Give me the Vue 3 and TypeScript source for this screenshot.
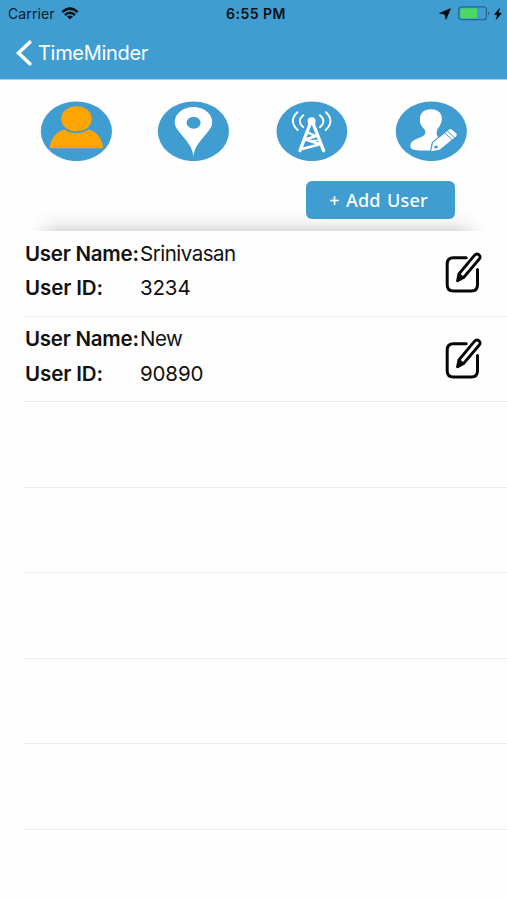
<script setup lang="ts">
interface User {
  name: string
  id: string
}

const users: User[] = [
  { name: 'Srinivasan', id: '3234' },
  { name: 'New', id: '90890' },
]
const emptyRows = 5
</script>

<template>
  <main class="screen">
    <header class="header">
      <div class="status">
        <div class="status-left">
          <span class="carrier">Carrier</span>
          <svg class="wifi" width="18" height="13" viewBox="0 0 18 13" fill="none" stroke="#07131b" stroke-width="2.5">
            <path d="M1.3 5.2Q9-1.9 16.7 5.2" />
            <path d="M4 8Q9 3.6 14 8" />
            <path d="M6 9.6Q9 7.2 12 9.6L9 12.6Z" fill="#07131b" stroke="none" />
          </svg>
        </div>
        <span class="clock">6:55 PM</span>
        <div class="status-right">
          <svg width="12" height="12" viewBox="0 0 12 12"><path d="M11.4.7 7 11.2 5.9 6.2.6 5.3Z" fill="#030a0e" stroke="#030a0e" stroke-width=".7" /></svg>
          <svg class="battery" width="33" height="15" viewBox="0 0 33 15">
            <rect x=".8" y=".9" width="27.6" height="12.8" rx="3" fill="none" stroke="#276791" stroke-width="1.3" />
            <rect x="2.2" y="2.3" width="17" height="10" rx="1.5" fill="#4bd964" />
            <path d="M30 5Q32.5 7.3 30 9.6Z" fill="#276791" />
          </svg>
          <svg width="8" height="12" viewBox="0 0 8 12"><path d="M5.7.3.3 6.6 3.3 7 2 11.8 7.6 5.2 4.5 4.8Z" fill="#030a0e" stroke="#030a0e" stroke-width=".4" /></svg>
        </div>
      </div>
      <nav class="nav">
        <svg width="16" height="26" viewBox="0 0 16 26"><path d="M13.8 2.2 2.5 13 13.8 23.8" fill="none" stroke="#fff" stroke-width="3.6" stroke-linecap="round" /></svg>
        <span class="back">TimeMinder</span>
      </nav>
    </header>

    <section class="tabs">
      <svg class="tab" viewBox="0 0 73 60">
        <ellipse class="disc" cx="36.4" cy="30.3" rx="35.6" ry="29.8" />
        <path d="M9.7 47.2C10.5 38 16.5 30.2 24.5 28.6C31 33.6 42 33.6 48.5 28.6C56.5 30.2 62.5 38 63 47.2Z" fill="#ffa502" />
        <ellipse cx="36.5" cy="17.8" rx="15.8" ry="13.2" fill="#ffa502" stroke="#409dd1" stroke-width="1" />
      </svg>
      <svg class="tab" viewBox="0 0 73 60">
        <ellipse class="disc" cx="36.4" cy="30.3" rx="35.6" ry="29.8" />
        <path d="M36.4 55C35 45 29.5 40 23.5 32.5C20.2 28.5 17.7 25.5 17.7 21.3C17.7 12.8 26 6 36.5 6S55.3 12.8 55.3 21.3C55.3 25.5 52.8 28.5 49.5 32.5C43.3 40 38 45 36.4 55Z" fill="#fff" />
        <ellipse class="disc" cx="36.6" cy="21.7" rx="7" ry="6" />
      </svg>
      <svg class="tab" viewBox="0 0 73 60">
        <ellipse class="disc" cx="36.9" cy="30.3" rx="35.4" ry="29.8" />
        <g fill="none" stroke="#fff" stroke-width="1.9" stroke-linecap="round">
          <path d="M28.3 14.2Q21.3 20.2 28.3 26.2M44.9 14.2Q51.9 20.2 44.9 26.2" />
          <path d="M22.4 11.2Q13.2 19.7 22.6 29M50.9 11.2Q60.1 19.7 50.7 29" />
        </g>
        <g fill="none" stroke="#fff" stroke-width="2.5" stroke-linejoin="round">
          <path d="M25 49.7 35.2 22.5M48.6 49.7 38.1 22.5" stroke-width="3.3" stroke-linecap="round" />
          <path d="M33 31.5 40.5 35.2 30.6 38.5 45 43.2 27 48" />
          <path d="M30 39.5 43 39.5" stroke-width="1.4" />
        </g>
        <circle cx="36.6" cy="20.3" r="4" fill="#fff" />
      </svg>
      <svg class="tab" viewBox="0 0 73 60">
        <ellipse class="disc" cx="36.3" cy="30.3" rx="35.6" ry="29.8" />
        <path d="M35.9 8.3C43.2 8.3 47.2 12.5 46.8 18.5C46.3 23.5 43.8 26 42.3 28.8C41 31.5 41.5 34.5 43.8 37L36.2 44V49.4H25C18 49.4 15.2 47.8 15.3 44.5C15.8 39.5 21.5 38 27.8 35.3C31 33.5 31 30.5 29.3 28.3C27 25.5 25 23.5 24.9 18.7C24.8 12.3 28.8 8.3 35.9 8.3Z" fill="#fff" />
        <path class="pencil" d="M36.2 50.2 37.9 41.8 54.3 28.4Q55.7 27.6 57 28.7L61.3 32.6Q62.5 34 61.1 35.2L44.5 48.8Z" />
        <path d="M50 32 57.2 38.8M52.4 30 59.6 36.8" stroke="#409dd1" stroke-width="1" />
        <ellipse class="disc" cx="41" cy="46" rx="1.9" ry="1.6" />
      </svg>
    </section>

    <section class="actions">
      <button class="add" type="button"><span>+ Add User</span></button>
    </section>

    <ul class="list">
      <li v-for="user in users" :key="user.id" class="row">
        <dl class="details">
          <dt class="label name-label">User Name:</dt>
          <dd class="value name-value">{{ user.name }}</dd>
          <dt class="label id-label">User ID:</dt>
          <dd class="value">{{ user.id }}</dd>
        </dl>
        <svg class="edit" width="38" height="42" viewBox="0 0 38 42" fill="none" stroke="#060606" stroke-width="3" stroke-linecap="round" stroke-linejoin="round">
          <path d="M22.2 6.8H9.4Q3.2 6.8 3.2 13V33.7Q3.2 39.9 9.4 39.9H27.3Q33.5 39.9 33.5 33.7V18.5" />
          <path d="M13.5 29.8 14.9 23 30.6 4.2Q32.7 2 34.9 3.7Q37.1 5.6 35.3 8L19.6 26.5Z" stroke-width="2.8" />
          <path d="M15.4 23.3 18.8 26.2M13.7 29.5 16.4 26.2" stroke-width="2" />
        </svg>
      </li>
      <li v-for="n in emptyRows" :key="`empty-${n}`" class="row"></li>
    </ul>
  </main>
</template>

<style>
body {
  margin: 0;
  background: #fefefe;
}
</style>

<style scoped>
.screen {
  width: 507px;
  height: 900px;
  overflow: hidden;
  background: #fefefe;
  font-family: Inter, 'Liberation Sans', sans-serif;
  color: #111;
}

svg {
  display: block;
  flex: none;
}

.header {
  box-sizing: border-box;
  height: 80px;
  background: #409dd1;
  border-bottom: 1px solid #a7d2ea;
}

.status {
  display: grid;
  grid-template-columns: 1fr auto 1fr;
  align-items: center;
  height: 27px;
  padding: 0 5px 0 8px;
}

.status-left,
.status-right {
  display: flex;
  align-items: center;
}

.status-left {
  gap: 6px;
}

.status-right {
  justify-content: flex-end;
  gap: 7px;
}

.battery {
  margin-right: -4px;
}

.carrier {
  font-size: 14px;
  letter-spacing: 0.1px;
  color: #07202f;
}

.clock {
  padding-left: 2px;
  font-size: 14px;
  font-weight: 600;
  letter-spacing: 0.5px;
  color: #041119;
}

.nav {
  display: flex;
  align-items: center;
  gap: 6px;
  height: 51px;
  padding-left: 16px;
}

.back {
  font-size: 20px;
  letter-spacing: -0.3px;
  color: #fff;
}

.tabs {
  display: grid;
  grid-template-columns: 117px 118px 120px 73px;
  padding: 21px 0 0 40px;
}

.tab {
  width: 73px;
  height: 60px;
}

.disc {
  fill: #409dd1;
}

.pencil {
  fill: #fff;
  stroke: #409dd1;
  stroke-width: 2.4;
  paint-order: stroke;
}

.actions {
  display: flex;
  justify-content: flex-end;
  box-sizing: border-box;
  height: 70px;
  padding: 20px 52px 0 0;
  background:
    linear-gradient(to right, #fefefe 30px, transparent 58px, transparent 455px, #fefefe 485px),
    linear-gradient(to bottom, #fefefe 49px, #f4f4f4 61px, #dedede 70px);
}

.add {
  width: 149px;
  height: 38px;
  padding: 0 4px 0 0;
  border: 0;
  border-radius: 6px;
  background: #409dd1;
  color: #fff;
  font-family: 'Noto Sans', 'Open Sans', sans-serif;
  font-size: 18px;
  font-weight: 500;
  letter-spacing: 0.2px;
  word-spacing: 1.5px;
  line-height: 36px;
}

.list {
  margin: 0;
  padding: 0 0 0 25px;
  list-style: none;
}

.row {
  display: flex;
  justify-content: space-between;
  box-sizing: border-box;
  height: 85.5px;
  padding: 5.5px 24px 0 0;
  border-bottom: 1.5px solid #ebebeb;
}

.details {
  display: grid;
  grid-template-columns: 115px auto;
  grid-auto-rows: 34.5px;
  margin: 0;
  font-size: 20.5px;
  line-height: 34.5px;
  white-space: nowrap;
}

.label {
  font-weight: 600;
}

.name-label {
  letter-spacing: -0.25px;
}

.id-label {
  letter-spacing: -0.1px;
}

.value {
  margin: 0;
  letter-spacing: -0.15px;
}

.name-value {
  letter-spacing: -0.5px;
}

.edit {
  margin: 14.5px 1px 0 0;
}
</style>
